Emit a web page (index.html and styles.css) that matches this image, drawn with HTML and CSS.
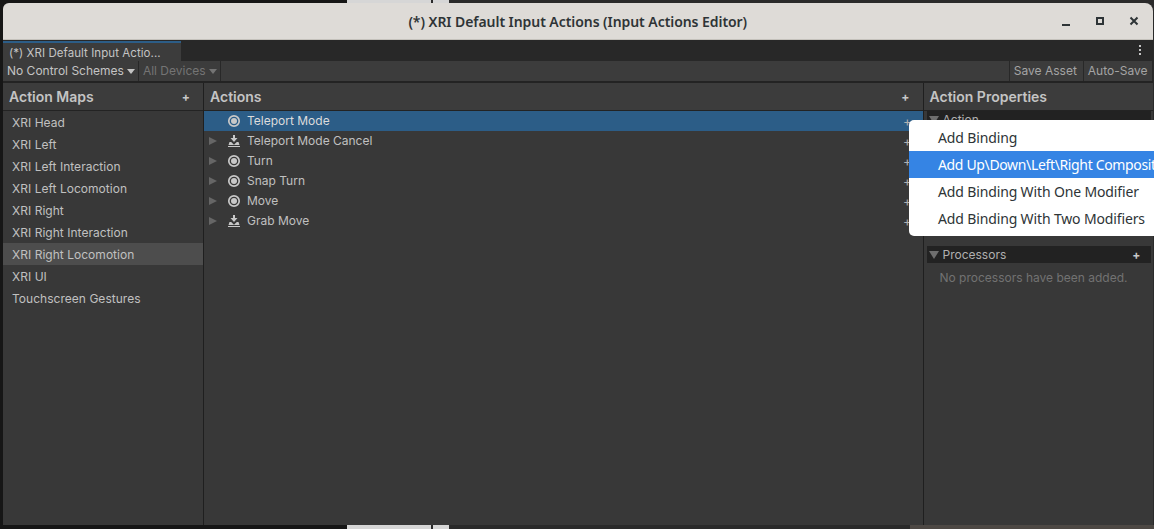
FILE: index.html
```
<!DOCTYPE html>
<html lang="en">
<head>
<meta charset="utf-8">
<title>XRI Default Input Actions</title>
<link rel="stylesheet" href="styles.css">
</head>
<body>
<div class="window">
  <header class="titlebar">
    <span class="title">(*) XRI Default Input Actions (Input Actions Editor)</span>
    <div class="wm-buttons">
      <svg class="wm" width="12" height="12" viewBox="0 0 12 12"><rect x="2" y="9" width="8" height="2" fill="#2e3436"/></svg>
      <svg class="wm" width="12" height="12" viewBox="0 0 12 12"><path d="M2 2h8v8H2z M4 4v4h4V4z" fill="#2e3436" fill-rule="evenodd"/></svg>
      <svg class="wm" width="12" height="12" viewBox="0 0 12 12"><path d="M2.5 2.5l7 7M9.5 2.5l-7 7" stroke="#2e3436" stroke-width="2" fill="none"/></svg>
    </div>
  </header>
  <div class="tabstrip">
    <div class="tab">(*) XRI Default Input Actio...</div>
    <svg class="kebab" width="4" height="12" viewBox="0 0 4 12"><rect x="1" y="1" width="2" height="2" fill="#c4c4c4"/><rect x="1" y="5" width="2" height="2" fill="#c4c4c4"/><rect x="1" y="9" width="2" height="2" fill="#c4c4c4"/></svg>
  </div>
  <div class="toolbar">
    <div class="tool-drop">No Control Schemes<span class="caret"></span></div>
    <div class="tool-drop disabled">All Devices<span class="caret"></span></div>
    <div class="tool-spacer"></div>
    <div class="tool-btn save">Save Asset</div>
    <div class="tool-btn auto">Auto-Save</div>
  </div>
  <main class="panes">
    <section class="pane maps">
      <div class="pane-head"><span>Action Maps</span><span class="plus">+</span></div>
      <ul class="map-list">
        <li>XRI Head</li>
        <li>XRI Left</li>
        <li>XRI Left Interaction</li>
        <li>XRI Left Locomotion</li>
        <li>XRI Right</li>
        <li>XRI Right Interaction</li>
        <li class="active">XRI Right Locomotion</li>
        <li>XRI UI</li>
        <li>Touchscreen Gestures</li>
      </ul>
    </section>
    <section class="pane actions">
      <div class="pane-head"><span>Actions</span><span class="plus">+</span></div>
      <ul class="action-list">
        <li class="selected"><span class="arrow none"></span><svg class="ico" width="14" height="14" viewBox="0 0 14 14"><circle cx="7" cy="7" r="5.2" fill="none" stroke="#c8c8c8" stroke-width="1.7"/><circle cx="7" cy="7" r="3" fill="#c8c8c8"/></svg><span class="label">Teleport Mode</span><span class="row-plus">+</span></li>
        <li><span class="arrow"></span><svg class="ico" width="14" height="14" viewBox="0 0 14 14"><path d="M6 1h2v3h2.5L7 8 3.5 4H6zM2.5 8h1.7L7 10.8 9.8 8h1.7l1 3H1.500zM1 12h12v1H1z" fill="#c8c8c8"/></svg><span class="label">Teleport Mode Cancel</span><span class="row-plus">+</span></li>
        <li><span class="arrow"></span><svg class="ico" width="14" height="14" viewBox="0 0 14 14"><circle cx="7" cy="7" r="5.2" fill="none" stroke="#c8c8c8" stroke-width="1.7"/><circle cx="7" cy="7" r="3" fill="#c8c8c8"/></svg><span class="label">Turn</span><span class="row-plus">+</span></li>
        <li><span class="arrow"></span><svg class="ico" width="14" height="14" viewBox="0 0 14 14"><circle cx="7" cy="7" r="5.2" fill="none" stroke="#c8c8c8" stroke-width="1.7"/><circle cx="7" cy="7" r="3" fill="#c8c8c8"/></svg><span class="label">Snap Turn</span><span class="row-plus">+</span></li>
        <li><span class="arrow"></span><svg class="ico" width="14" height="14" viewBox="0 0 14 14"><circle cx="7" cy="7" r="5.2" fill="none" stroke="#c8c8c8" stroke-width="1.7"/><circle cx="7" cy="7" r="3" fill="#c8c8c8"/></svg><span class="label">Move</span><span class="row-plus">+</span></li>
        <li><span class="arrow"></span><svg class="ico" width="14" height="14" viewBox="0 0 14 14"><path d="M6 1h2v3h2.5L7 8 3.5 4H6zM2.5 8h1.7L7 10.8 9.8 8h1.7l1 3H1.500zM1 12h12v1H1z" fill="#c8c8c8"/></svg><span class="label">Grab Move</span><span class="row-plus">+</span></li>
      </ul>
    </section>
    <section class="pane props">
      <div class="pane-head"><span>Action Properties</span></div>
      <div class="prop-body">
        <div class="fold first"><span class="fold-arrow"></span><span>Action</span></div>
        <div class="fold proc"><span class="fold-arrow"></span><span>Processors</span><span class="plus">+</span></div>
        <div class="empty">No processors have been added.</div>
      </div>
    </section>
  </main>
</div>
<div class="menu">
  <div class="menu-item">Add Binding</div>
  <div class="menu-item hot">Add Up\Down\Left\Right Composite</div>
  <div class="menu-item">Add Binding With One Modifier</div>
  <div class="menu-item">Add Binding With Two Modifiers</div>
</div>
</body>
</html>
```

FILE: styles.css
```
* { box-sizing: border-box; }
html, body { margin: 0; height: 100%; }
body {
  width: 1154px;
  height: 529px;
  overflow: hidden;
  background: linear-gradient(90deg, #161616 0 347px, #d6d6d6 347px 431px, #2a2a2a 431px 433px, #d6d6d6 433px 449px, #2a2a2a 449px);
  padding: 3px 1.5px 4px 3px;
  font-family: Inter, "Liberation Sans", sans-serif;
  font-size: 12px;
  color: #c4c4c4;
  position: relative;
}
body::after {
  content: "";
  position: absolute;
  left: 910px;
  right: 0;
  bottom: 0;
  height: 4px;
  background: #4d4844;
}
ul { list-style: none; margin: 0; padding: 0; }
.window {
  height: 100%;
  display: flex;
  flex-direction: column;
  background: #383838;
  border-radius: 6px 8px 0 0;
  overflow: hidden;
}
.titlebar {
  height: 37px;
  flex: none;
  background: #dedbd7;
  border-bottom: 1px solid #c4c1bb;
  display: flex;
  align-items: center;
  justify-content: center;
  position: relative;
  color: #2e3436;
}
.title {
  font-family: "Noto Sans", sans-serif;
  font-weight: 600;
  font-size: 14px;
  letter-spacing: -.06px;
}
.wm-buttons {
  position: absolute;
  right: 13px;
  top: 12px;
  display: flex;
  gap: 22px;
}
.wm { display: block; }
.tabstrip {
  height: 21px;
  flex: none;
  background: #282828;
  display: flex;
  justify-content: space-between;
  align-items: flex-start;
}
.tab {
  width: 178px;
  height: 21px;
  margin-top: 1px;
  background: #3c3c3c;
  border-top: 2px solid #2c5d87;
  padding: 3px 0 0 6px;
  font-size: 11.5px;
  line-height: 15px;
  color: #c4c4c4;
  letter-spacing: .06px;
}
.kebab { margin: 4px 11px 0 0; }
.toolbar {
  height: 21px;
  flex: none;
  background: #3c3c3c;
  border-bottom: 1px solid #232323;
  display: flex;
  align-items: stretch;
  line-height: 20px;
  font-size: 12px;
}
.tool-drop {
  padding: 0 3px 0 4px;
  display: flex;
  align-items: center;
  border-right: 1px solid #282828;
  gap: 3px;
}
.tool-drop.disabled { color: #747474; }
.caret {
  width: 0;
  height: 0;
  border-left: 4px solid transparent;
  border-right: 4px solid transparent;
  border-top: 5px solid currentColor;
}
.tool-spacer { flex: 1; }
.tool-btn {
  padding: 0 4px;
  color: #a4a4a4;
  border-left: 1px solid #282828;
}
.tool-btn.save { padding-right: 6px; }
.auto { border-right: 1px solid #282828; }
.panes {
  flex: 1;
  display: flex;
  min-height: 0;
  border-top: 1px solid #232323;
  background: #383838;
}
.pane { border-right: 1px solid #1f1f1f; display: flex; flex-direction: column; }
.maps { width: 201px; flex: none; }
.actions { flex: 1; }
.props { width: 229px; flex: none; border-right: 0; }
.pane-head {
  height: 28px;
  flex: none;
  background: #3c3c3c;
  border-bottom: 1px solid #232323;
  display: flex;
  justify-content: space-between;
  align-items: center;
  padding: 0 13px 0 6px;
  font-size: 14px;
  font-weight: 600;
  color: #c4c4c4;
}
.plus { font-size: 12px; font-weight: 700; color: #c8c8c8; }
.map-list li {
  height: 22px;
  line-height: 24px;
  padding-left: 9px;
  font-size: 12px;
  letter-spacing: .03px;
  color: #c0c0c0;
}
.map-list li.active { background: #4d4d4d; }
.action-list li {
  height: 20px;
  display: flex;
  align-items: center;
  color: #c0c0c0;
  position: relative;
  font-size: 12px;
}
.action-list li .label { position: relative; top: -1px; }
.action-list li.selected { background: #2c5d87; color: #dcdcdc; }
.arrow {
  width: 0;
  height: 0;
  margin-left: 5px;
  border-top: 4.5px solid transparent;
  border-bottom: 4.5px solid transparent;
  border-left: 8px solid #666666;
}
.arrow.none { border-left-color: transparent; }
.ico { margin-left: 10px; }
.label { margin-left: 6px; }
.row-plus {
  position: absolute;
  right: 11px;
  color: #b0b0b0;
  font-size: 13px;
}
.prop-body { padding: 0 2px 0 3px; }
.fold {
  height: 17px;
  background: #222222;
  display: flex;
  align-items: center;
  font-size: 12px;
  color: #b0b0b0;
  padding: 0 10px 0 2px;
}
.fold.first { margin-top: 0; }
.fold.proc { margin-top: 118px; }
.fold .plus { margin-left: auto; }
.fold-arrow {
  width: 0;
  height: 0;
  margin-right: 4px;
  border-left: 5px solid transparent;
  border-right: 5px solid transparent;
  border-top: 8px solid #6e6e6e;
}
.empty {
  margin-top: 7px;
  padding-left: 13px;
  font-size: 12px;
  color: #727272;
}
.menu {
  position: absolute;
  left: 909px;
  top: 120px;
  width: 245px;
  height: 116px;
  background: #ffffff;
  border-radius: 5px 0 0 5px;
  padding-top: 4px;
  overflow: hidden;
}
.menu-item {
  height: 27px;
  line-height: 27px;
  padding-left: 29px;
  font-family: "Noto Sans", sans-serif;
  font-size: 14px;
  letter-spacing: -.14px;
  color: #2e3436;
  white-space: nowrap;
}
.menu-item.hot { background: #3584e4; color: #ffffff; letter-spacing: -.35px; }
```
